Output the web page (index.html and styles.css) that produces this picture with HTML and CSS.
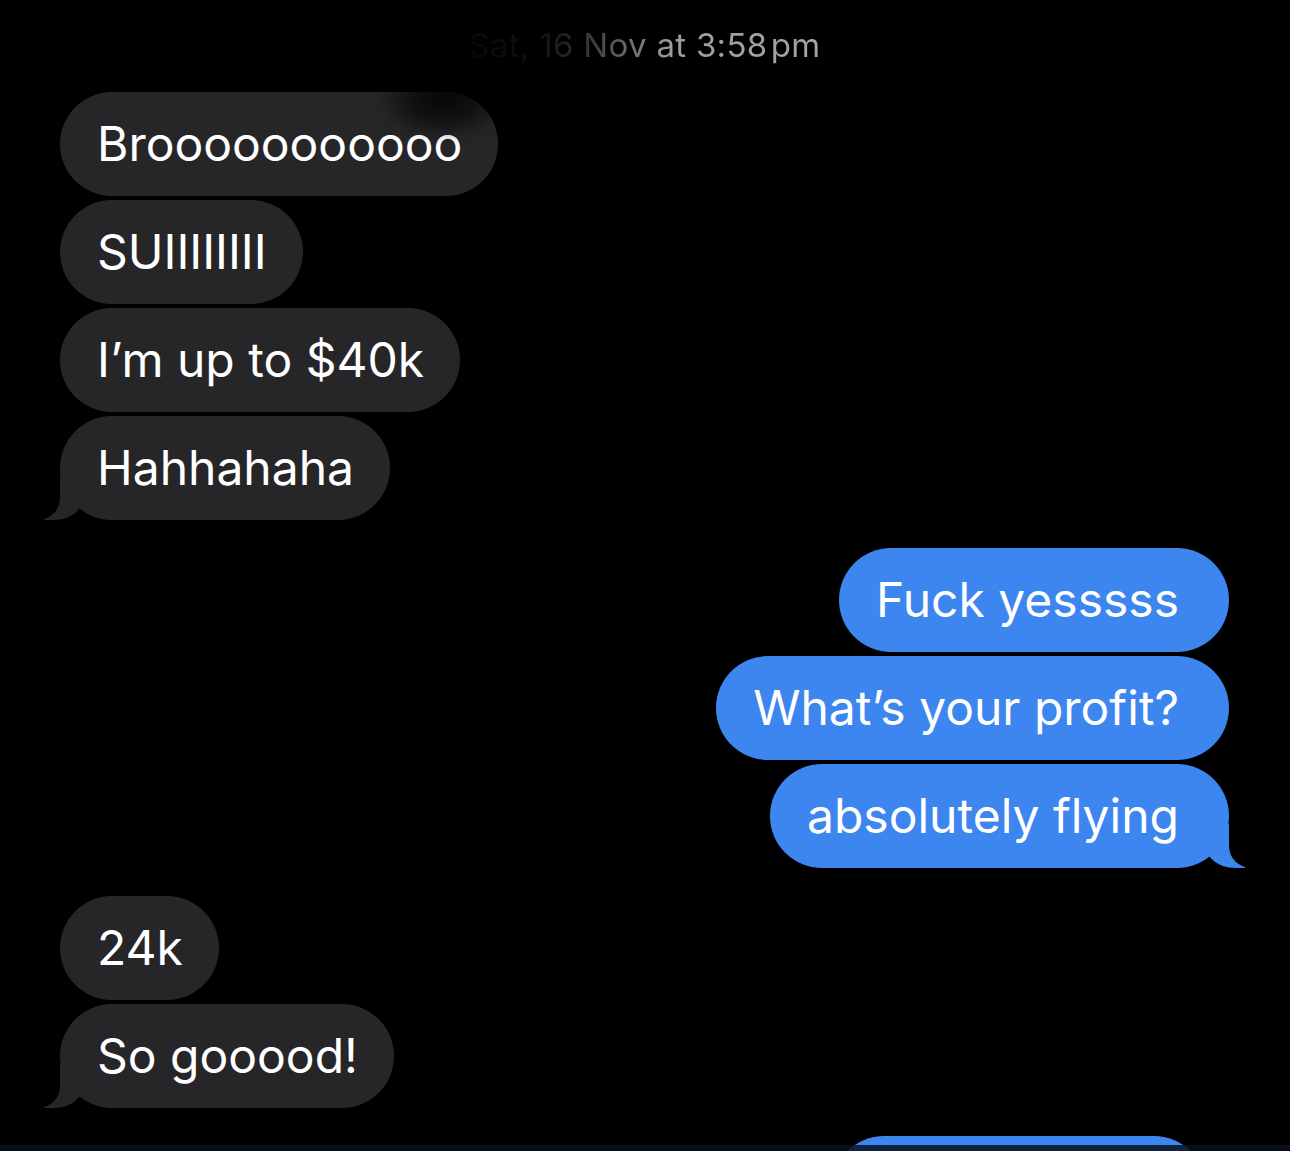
FILE: index.html
```html
<!DOCTYPE html>
<html lang="en">
<head>
    <meta charset="UTF-8">
    <meta name="viewport" content="width=device-width, initial-scale=1.0">
    <title>Messages</title>
    <link rel="stylesheet" href="styles.css">
</head>
<body>

    <div class="thread">
        <p class="stamp"><span>Sat, 16 Nov at 3:58&#8202;pm</span></p>

        <div class="group them">
            <div class="bubble">Brooooooooooo<span class="smudge"></span></div>
            <div class="bubble">SUIIIIIIII</div>
            <div class="bubble">I’m up to $40k</div>
            <div class="bubble last">Hahhahaha</div>
        </div>

        <div class="group me">
            <div class="bubble">Fuck yesssss</div>
            <div class="bubble">What’s your profit?</div>
            <div class="bubble last">absolutely flying</div>
        </div>

        <div class="group them">
            <div class="bubble">24k</div>
            <div class="bubble last">So gooood!</div>
        </div>

        <div class="group me">
            <div class="bubble cut">&nbsp;</div>
        </div>
    </div>

    <div class="bottom-bar"></div>

</body>
</html>
```

FILE: styles.css
```css
body {
    margin: 0;
    padding: 0;
    background-color: #000;
    color: #fff;
    font-family: 'Inter', 'Noto Sans', sans-serif;
    height: 1151px;
    overflow: hidden;
}
.thread {
    padding: 0 61px 0 60px;
    display: flex;
    flex-direction: column;
    gap: 28px;
}
.stamp {
    margin: 0;
    height: 64px;
    padding-top: 26px;
    box-sizing: border-box;
    text-align: center;
    font-size: 33px;
    line-height: 38px;
    letter-spacing: 0.3px;
}
.stamp span {
    background: linear-gradient(90deg, #080808 0%, #101010 20%, #2e2e2f 32%, #6f6f73 46%, #9d9da2 58%, #a3a3a8 100%);
    -webkit-background-clip: text;
    background-clip: text;
    color: transparent;
}
.group {
    display: flex;
    flex-direction: column;
    gap: 4px;
}
.them {
    align-items: flex-start;
}
.me {
    align-items: flex-end;
}
.bubble {
    position: relative;
    height: 104px;
    line-height: 104px;
    border-radius: 52px;
    font-size: 48px;
    white-space: nowrap;
}
.them .bubble {
    padding: 0 36px 0 37px;
    background-color: #262629;
}
.me .bubble {
    padding: 0 50px 0 37px;
    background-color: #3d85ef;
}

/* tails */
.bubble.last::before,
.bubble.last::after {
    content: "";
    position: absolute;
    bottom: 0;
    height: 44px;
}
.them .bubble.last::before {
    left: -16px;
    width: 40px;
    background-color: #262629;
    border-bottom-right-radius: 30px 24px;
}
.them .bubble.last::after {
    left: -40px;
    width: 40px;
    background-color: #000;
    border-bottom-right-radius: 22px;
}
.me .bubble.last::before {
    right: -16px;
    width: 40px;
    background-color: #3d85ef;
    border-bottom-left-radius: 30px 24px;
}
.me .bubble.last::after {
    right: -40px;
    width: 40px;
    background-color: #000;
    border-bottom-left-radius: 22px;
}

.me .bubble.cut {
    width: 287px;
    margin-right: 23px;
}
.smudge {
    position: absolute;
    top: -22px;
    right: 0;
    width: 120px;
    height: 70px;
    background: radial-gradient(ellipse at 55% 40%, rgba(0, 0, 0, 0.85) 0%, rgba(0, 0, 0, 0.5) 40%, rgba(0, 0, 0, 0) 70%);
    filter: blur(6px);
}
.bottom-bar {
    position: fixed;
    left: 0;
    right: 0;
    bottom: 0;
    height: 6px;
    background-color: rgba(8, 18, 32, 0.85);
}
```
